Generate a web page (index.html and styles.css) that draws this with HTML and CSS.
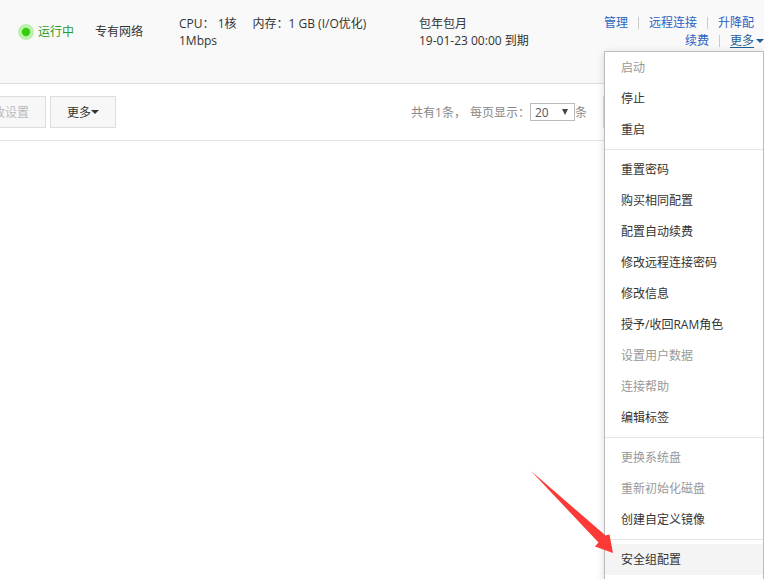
FILE: index.html
```html
<!DOCTYPE html>
<html lang="zh-CN">
<head>
<meta charset="utf-8">
<title>实例列表</title>
<link rel="stylesheet" href="styles.css">
</head>
<body>
<main class="page">
  <section class="instance">
    <div class="status">
      <svg class="status-dot" viewBox="0 0 16 16" aria-hidden="true"><circle cx="8" cy="8" r="8" fill="#bdf0b0"/><circle cx="8" cy="8" r="4.2" fill="#35cf0a"/></svg>
      <span>运行中</span>
    </div>
    <div class="network">专有网络</div>
    <div class="spec">
      <div class="spec-line"><span>CPU： 1核</span><span>内存：1 GB (I/O优化)</span></div>
      <div>1Mbps</div>
    </div>
    <div class="billing">
      <div>包年包月</div>
      <div>19-01-23 00:00 到期</div>
    </div>
    <nav class="actions">
      <div class="action-line">
        <a href="#">管理</a><span class="sep"></span><a href="#">远程连接</a><span class="sep"></span><a href="#">升降配</a>
      </div>
      <div class="action-line action-line-end">
        <a href="#">续费</a><span class="sep"></span><a class="more" href="#"><span class="more-text">更多</span><svg class="caret" viewBox="0 0 8 4" aria-hidden="true"><path d="M0 0h8L4 4z"/></svg></a>
      </div>
      <ul class="menu">
        <li><button class="item" disabled>启动</button></li>
        <li><button class="item">停止</button></li>
        <li><button class="item">重启</button></li>
        <li class="divider"></li>
        <li><button class="item">重置密码</button></li>
        <li><button class="item">购买相同配置</button></li>
        <li><button class="item">配置自动续费</button></li>
        <li><button class="item">修改远程连接密码</button></li>
        <li><button class="item">修改信息</button></li>
        <li><button class="item">授予/收回RAM角色</button></li>
        <li><button class="item" disabled>设置用户数据</button></li>
        <li><button class="item" disabled>连接帮助</button></li>
        <li><button class="item">编辑标签</button></li>
        <li class="divider"></li>
        <li><button class="item" disabled>更换系统盘</button></li>
        <li><button class="item" disabled>重新初始化磁盘</button></li>
        <li><button class="item">创建自定义镜像</button></li>
        <li class="divider"></li>
        <li class="pointed"><button class="item active">安全组配置</button>
          <svg class="arrow" viewBox="0 0 84 84" aria-hidden="true"><path d="M1 1L75.500 65.500L79.500 64.500L83 83L65 76.500L68.500 72.500Z" fill="#fb3a38"/></svg>
        </li>
      </ul>
    </nav>
  </section>
  <section class="toolbar">
    <button class="btn" disabled>改设置</button>
    <button class="btn">更多<svg class="caret" viewBox="0 0 8 4" aria-hidden="true"><path d="M0 0h8L4 4z"/></svg></button>
    <div class="pager">
      <span>共有1条，</span>
      <label class="pager-label" for="size">每页显示：</label>
      <span class="select-box"><select id="size"><option>20</option></select><svg viewBox="0 0 7 7" aria-hidden="true"><path d="M0 0h7L3.500 7z"/></svg></span>
      <span>条</span>
    </div>
    <button class="btn btn-page" aria-label="首页"></button>
  </section>
</main>
</body>
</html>
```
FILE: styles.css
```css
* { box-sizing: border-box; }

body {
  margin: 0;
  font: 12px/17px "Open Sans", "Noto Sans CJK SC", sans-serif;
  color: #333;
  background: #fff;
}

.page {
  height: 100vh;
  overflow: hidden;
}

a { color: #2a63c4; text-decoration: none; }

button, select { font: inherit; color: inherit; margin: 0; }

.instance {
  position: relative;
  display: grid;
  grid-template-columns: 77px 84px 240px 160px 1fr;
  min-height: 84px;
  padding: 15px 0 0 18px;
  background: #f9f9f9;
  border-bottom: 1px solid #ddd;
}

.status {
  display: flex;
  align-items: center;
  gap: 4px;
  height: 33px;
  color: #2a9a2a;
}

.status-dot { width: 16px; height: 16px; }

.network { line-height: 33px; }

.spec-line { display: flex; gap: 16px; }

.actions { line-height: 18px; margin-top: -1px; }

.action-line {
  display: flex;
  justify-content: flex-end;
  align-items: center;
  padding-right: 10px;
}

.action-line-end { padding-right: 0; }

.sep {
  width: 1px;
  height: 12px;
  margin: 0 10px;
  background: #ccc;
}

.more { display: flex; align-items: center; gap: 2px; color: #1f5f96; }

.more-text { text-decoration: underline; text-underline-offset: 2px; }

.caret { width: 8px; height: 4px; fill: currentColor; }

.menu {
  position: absolute;
  top: 51px;
  right: 0;
  z-index: 2;
  width: 160px;
  margin: 0;
  padding: 0 0 8px;
  list-style: none;
  background: #fff;
  border: 1px solid #bbb;
  box-shadow: 0 2px 8px rgba(0, 0, 0, 0.14);
}

.item {
  display: block;
  width: 100%;
  height: 31px;
  padding: 0 16px;
  border: 0;
  background: none;
  text-align: left;
}

.item:disabled { color: #999; }

.item.active { background: #f4f4f4; }

.divider { height: 1px; margin: 4px 0; background: #e5e5e5; }

.pointed { position: relative; }

.arrow {
  position: absolute;
  right: 149px;
  bottom: 21px;
  width: 84px;
  height: 84px;
}

.toolbar {
  display: flex;
  align-items: center;
  gap: 4px;
  height: 57px;
  margin-left: -24px;
  border-bottom: 1px solid #dde3e8;
}

.btn {
  display: flex;
  align-items: center;
  height: 32px;
  padding: 0 16px;
  border: 1px solid #ddd;
  background: #f7f7f7;
}

.btn:disabled { color: #bbb; }

.pager {
  display: flex;
  align-items: center;
  margin-left: auto;
  color: #888;
}

.pager-label { margin-left: 4px; }

.select-box { position: relative; display: flex; }

.select-box select {
  width: 45px;
  height: 18px;
  padding: 0 4px;
  border: 1px solid #bbb;
  border-radius: 0;
  background: #fff;
  color: #555;
  appearance: none;
}

.select-box svg {
  position: absolute;
  top: 6px;
  right: 7px;
  width: 6px;
  height: 6px;
  fill: #444;
}

.btn-page { width: 161px; margin-left: 12px; }
```
